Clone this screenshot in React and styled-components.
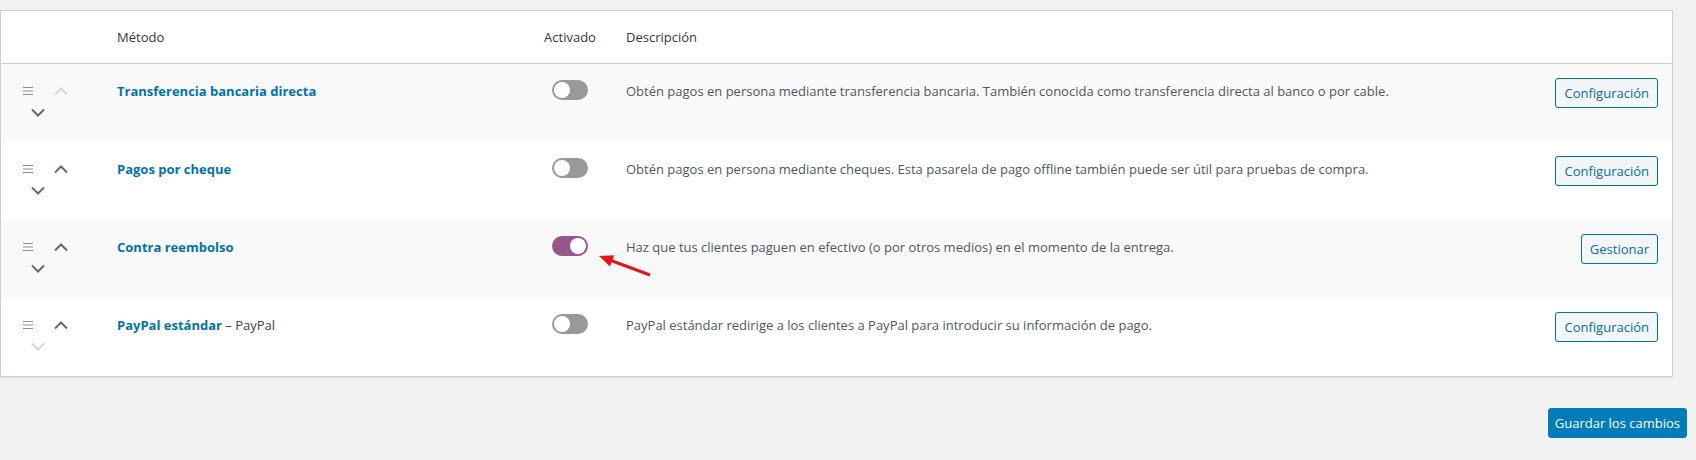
import styled, { createGlobalStyle } from "styled-components";

const GlobalStyle = createGlobalStyle`
  html, body {
    margin: 0;
    padding: 0;
    background: #f1f1f1;
  }
  body {
    font-family: "Open Sans", "Noto Sans", "Liberation Sans", sans-serif;
    font-size: 13px;
    color: #3c434a;
  }
`;

const methods = [
  {
    id: "bacs",
    title: "Transferencia bancaria directa",
    desc: "Obtén pagos en persona mediante transferencia bancaria. También conocida como transferencia directa al banco o por cable.",
    enabled: false,
    action: "Configuración",
    upDisabled: true,
  },
  {
    id: "cheque",
    title: "Pagos por cheque",
    desc: "Obtén pagos en persona mediante cheques. Esta pasarela de pago offline también puede ser útil para pruebas de compra.",
    enabled: false,
    action: "Configuración",
  },
  {
    id: "cod",
    title: "Contra reembolso",
    desc: "Haz que tus clientes paguen en efectivo (o por otros medios) en el momento de la entrega.",
    enabled: true,
    action: "Gestionar",
    arrow: true,
  },
  {
    id: "paypal",
    title: "PayPal estándar",
    suffix: "PayPal",
    desc: "PayPal estándar redirige a los clientes a PayPal para introducir su información de pago.",
    enabled: false,
    action: "Configuración",
    downDisabled: true,
  },
];

const Handle = () => (
  <svg width="12" height="10" viewBox="0 0 12 10">
    <path d="M1 1.5h10M1 5h10M1 8.5h10" stroke="#8c8f94" strokeWidth="1.2" fill="none" />
  </svg>
);

const Chevron = ({ dir, disabled }) => (
  <svg width="16" height="10" viewBox="0 0 16 10">
    <path
      d={dir === "up" ? "M2 8.5L8 2.5l6 6" : "M2 1.5l6 6 6-6"}
      stroke={disabled ? "#d5d7da" : "#646970"}
      strokeWidth="2"
      fill="none"
    />
  </svg>
);

export default function App() {
  return (
    <>
      <GlobalStyle />
      <Page>
        <Table>
          <HeadRow>
            <span />
            <HeadCell>Método</HeadCell>
            <HeadCell $center>Activado</HeadCell>
            <HeadCell $pad>Descripción</HeadCell>
            <span />
          </HeadRow>
          {methods.map((m, i) => (
            <Row key={m.id} $alt={i % 2 === 0}>
              <SortCell>
                <IconSlot $w={14}>
                  <Handle />
                </IconSlot>
                <IconSlot $w={16} $ml={18}>
                  <Chevron dir="up" disabled={m.upDisabled} />
                </IconSlot>
                <IconSlot $w={16} $ml={9}>
                  <Chevron dir="down" disabled={m.downDisabled} />
                </IconSlot>
              </SortCell>
              <NameCell>
                <Title>{m.title}</Title>
                {m.suffix && <Suffix> – {m.suffix}</Suffix>}
              </NameCell>
              <ToggleCell>
                <Toggle $on={m.enabled}>
                  <Knob $on={m.enabled} />
                </Toggle>
                {m.arrow && (
                  <Arrow width="56" height="26" viewBox="0 0 56 26">
                    <path d="M14 8.5L53 23" stroke="#e8141b" strokeWidth="3" fill="none" />
                    <path d="M2 4L17.2 3.3L13 14.5z" fill="#e8141b" />
                  </Arrow>
                )}
              </ToggleCell>
              <DescCell>{m.desc}</DescCell>
              <ActionCell>
                <OutlineButton>{m.action}</OutlineButton>
              </ActionCell>
            </Row>
          ))}
        </Table>
        <Footer>
          <PrimaryButton>Guardar los cambios</PrimaryButton>
        </Footer>
      </Page>
    </>
  );
}

const Page = styled.div`
  width: 1696px;
  padding-top: 10px;
`;

const Table = styled.div`
  width: 1673px;
  box-sizing: border-box;
  background: #fff;
  border: 1px solid #ccd0d4;
  box-shadow: 0 1px 1px rgba(0, 0, 0, 0.06);
`;

const columns = "116px 420px 66px 1fr auto";

const HeadRow = styled.div`
  display: grid;
  grid-template-columns: ${columns};
  align-items: center;
  height: 52px;
  border-bottom: 1px solid #ccd0d4;
`;

const HeadCell = styled.div`
  color: #32373c;
  font-size: 13px;
  line-height: 22px;
  text-align: ${(p) => (p.$center ? "center" : "left")};
  padding-left: ${(p) => (p.$pad ? "23px" : "0")};
`;

const Row = styled.div`
  display: grid;
  grid-template-columns: ${columns};
  align-items: start;
  height: 78px;
  box-sizing: border-box;
  padding-top: 14px;
  background: ${(p) => (p.$alt ? "#f9f9f9" : "#fff")};
`;

const SortCell = styled.div`
  display: flex;
  flex-wrap: wrap;
  width: 64px;
  padding: 2px 0 0 20px;
`;

const IconSlot = styled.span`
  display: inline-flex;
  align-items: center;
  justify-content: center;
  width: ${(p) => p.$w}px;
  height: 22px;
  margin-left: ${(p) => p.$ml || 0}px;
`;

const NameCell = styled.div`
  padding-top: 2px;
  line-height: 22px;
  font-size: 13px;
`;

const Title = styled.a`
  color: #0073aa;
  font-weight: 700;
  text-decoration: none;
`;

const Suffix = styled.span`
  color: #3c434a;
`;

const ToggleCell = styled.div`
  position: relative;
  display: flex;
  justify-content: center;
  padding-top: 2px;
`;

const Toggle = styled.span`
  position: relative;
  display: inline-block;
  width: 36px;
  height: 20px;
  border-radius: 10px;
  box-sizing: border-box;
  background: ${(p) => (p.$on ? "#96588a" : "#999")};
`;

const Knob = styled.span`
  position: absolute;
  top: 2px;
  left: ${(p) => (p.$on ? "18px" : "2px")};
  width: 16px;
  height: 16px;
  border-radius: 50%;
  background: #fff;
`;

const Arrow = styled.svg`
  position: absolute;
  left: 60px;
  top: 18px;
`;

const DescCell = styled.div`
  padding: 2px 0 0 23px;
  line-height: 22px;
  font-size: 13px;
  color: #50575e;
`;

const ActionCell = styled.div`
  padding-right: 14px;
  display: flex;
  justify-content: flex-end;
`;

const OutlineButton = styled.button`
  height: 30px;
  padding: 0 8px;
  font-family: inherit;
  font-size: 13px;
  color: #0071a1;
  background: #f3f5f6;
  border: 1px solid #0071a1;
  border-radius: 3px;
  cursor: pointer;
`;

const Footer = styled.div`
  display: flex;
  justify-content: flex-end;
  padding: 31px 9px 0 0;
`;

const PrimaryButton = styled.button`
  height: 30px;
  padding: 0 6px;
  font-family: inherit;
  font-size: 13px;
  color: #fff;
  background: #007cba;
  border: 1px solid #007cba;
  border-radius: 3px;
  cursor: pointer;
`;
